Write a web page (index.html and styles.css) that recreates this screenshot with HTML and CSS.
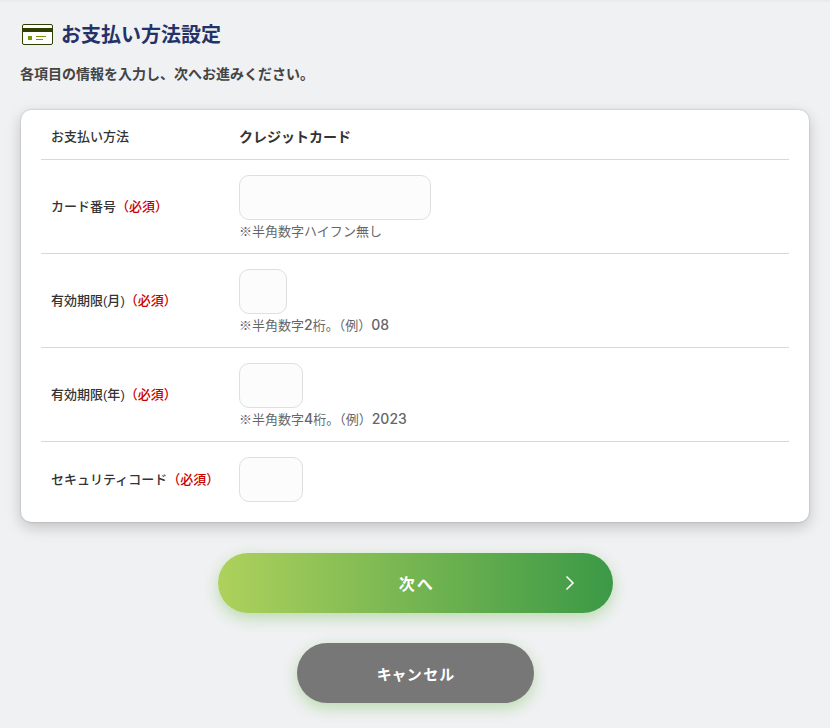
FILE: index.html
```html
<!DOCTYPE html>
<html lang="ja">
<head>
<meta charset="utf-8">
<title>お支払い方法設定</title>
<link rel="stylesheet" href="styles.css">
</head>
<body>
<main class="page">
  <header class="title-row">
    <svg class="card-icon" width="31" height="21" viewBox="0 0 31 21" aria-hidden="true">
      <rect x="0.5" y="0.5" width="30" height="20" rx="1.5" fill="#fff" stroke="#2f3f00"/>
      <rect x="1" y="4" width="29" height="4" fill="#2f3f00"/>
      <rect x="6" y="12" width="4" height="4" fill="#6f9a00"/>
      <rect x="14" y="12" width="10" height="1" fill="#6f9a00"/>
      <rect x="14" y="15" width="7" height="1" fill="#6f9a00"/>
    </svg>
    <h1 class="title">お支払い方法設定</h1>
  </header>
  <p class="lead">各項目の情報を入力し、次へお進みください。</p>
  <section class="card">
    <div class="row row-head">
      <div class="label">お支払い方法</div>
      <div class="method">クレジットカード</div>
    </div>
    <div class="row">
      <div class="label">カード番号<span class="req">（必須）</span></div>
      <div class="value">
        <input class="field field-number" type="text">
        <p class="note">※半角数字ハイフン無し</p>
      </div>
    </div>
    <div class="row">
      <div class="label label-latin">有効期限<span class="lat">(</span>月<span class="lat">)</span><span class="req">（必須）</span></div>
      <div class="value">
        <input class="field field-month" type="text">
        <p class="note">※半角数字<span class="num">2</span>桁。（例）<span class="num">08</span></p>
      </div>
    </div>
    <div class="row">
      <div class="label label-latin">有効期限<span class="lat">(</span>年<span class="lat">)</span><span class="req">（必須）</span></div>
      <div class="value">
        <input class="field field-year" type="text">
        <p class="note">※半角数字<span class="num">4</span>桁。（例）<span class="num">2023</span></p>
      </div>
    </div>
    <div class="row row-last">
      <div class="label">セキュリティコード<span class="req">（必須）</span></div>
      <div class="value value-last">
        <input class="field field-year" type="text">
      </div>
    </div>
  </section>
  <div class="actions">
    <button class="btn btn-next" type="button">次へ
      <svg class="chev" width="10" height="16" viewBox="0 0 10 16" aria-hidden="true"><path d="M1.5 1.500 8 8l-6.500 6.500" fill="none" stroke="#fff" stroke-width="1.600"/></svg>
    </button>
    <button class="btn btn-cancel" type="button">キャンセル</button>
  </div>
</main>
</body>
</html>
```
FILE: styles.css
```css
* { box-sizing: border-box; }
html, body { margin: 0; height: 728px; overflow: hidden; }
body {
  background: #f0f1f3;
  font-family: "Noto Sans CJK JP", "Liberation Sans", sans-serif;
  color: #333;
  box-shadow: inset 0 3px 3px -2px rgba(0,0,0,.05);
}
.page { padding: 20px 21px 0; }
.title-row { display: flex; align-items: center; gap: 8px; margin-left: 1px; height: 27px; }
.card-icon { display: block; flex: none; margin-top: 1px; }
.title { margin: 0; font-size: 20px; line-height: 27px; font-weight: 700; color: #253268; }
.lead { margin: 15px 0 0 -1px; font-size: 14px; line-height: 22px; font-weight: 700; color: #444; }
.card {
  margin-top: 26px;
  width: 788px;
  background: #fff;
  border-radius: 10px;
  padding: 0 20px 5px;
  box-shadow: 0 0 2px rgba(0,0,0,.25), 0 5px 15px rgba(0,0,0,.2);
}
.row {
  display: flex;
  align-items: center;
  border-bottom: 1px solid #d8d8d8;
  padding: 0 10px;
}
.row-head { height: 50px; padding-top: 5px; }
.row-last { border-bottom: 0; }
.label { width: 188px; flex: none; font-size: 13px; line-height: 18px; padding-bottom: 2px; font-weight: 500; color: #333; }
.label-latin { padding-bottom: 0; }
.lat { font-family: "Liberation Sans", sans-serif; }
.req { color: #c80000; }
.method { font-size: 14px; line-height: 18px; padding-bottom: 2px; font-weight: 700; color: #333; }
.value { padding: 15px 0 11px; }
.value-last { padding-bottom: 15px; }
.field {
  display: block;
  height: 45px;
  background: #fcfcfc;
  border: 1px solid #dfdfdf;
  border-radius: 10px;
  padding: 0;
}
.field-number { width: 192px; }
.field-month { width: 48px; }
.field-year { width: 64px; }
.note { margin: 0; height: 22px; font-size: 13px; line-height: 22px; font-weight: 400; color: #666; }
.num { font-family: "Inter", sans-serif; font-size: 14px; font-weight: 500; line-height: 1; }
.actions { display: flex; flex-direction: column; align-items: center; gap: 30px; margin-top: 31px; margin-left: 1px; }
.btn {
  position: relative;
  height: 60px;
  border: 0;
  border-radius: 30px;
  color: #fff;
  font-family: inherit;
  font-weight: 700;
  letter-spacing: 2px;
  font-feature-settings: "palt";
  box-shadow: 0 5px 15px rgba(120,190,90,.45);
}
.btn-next { width: 395px; font-size: 16px; padding: 0 0 0 2px; background: linear-gradient(90deg, #aed15c, #3b9946); }
.btn-cancel { width: 237px; font-size: 15px; padding: 0 0 0 2px; background: #777; }
.chev { position: absolute; right: 38px; top: 22px; }
```
